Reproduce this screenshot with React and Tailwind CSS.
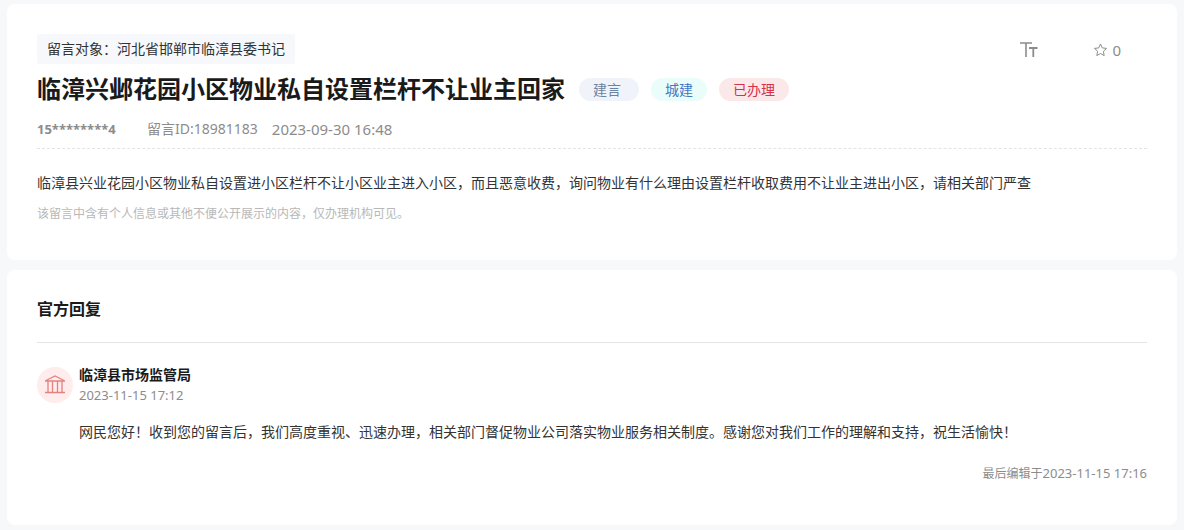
import React from "react";

const message = {
  target: "河北省邯郸市临漳县委书记",
  title: "临漳兴邺花园小区物业私自设置栏杆不让业主回家",
  user: "15********4",
  id: "18981183",
  date: "2023-09-30 16:48",
  content:
    "临漳县兴业花园小区物业私自设置进小区栏杆不让小区业主进入小区，而且恶意收费，询问物业有什么理由设置栏杆收取费用不让业主进出小区，请相关部门严查",
  notice: "该留言中含有个人信息或其他不便公开展示的内容，仅办理机构可见。",
};

const reply = {
  office: "临漳县市场监管局",
  date: "2023-11-15 17:12",
  content:
    "网民您好！收到您的留言后，我们高度重视、迅速办理，相关部门督促物业公司落实物业服务相关制度。感谢您对我们工作的理解和支持，祝生活愉快！",
  edited: "2023-11-15 17:16",
};

const FontSizeIcon = () => (
  <svg width="18" height="16" viewBox="0 0 18 16" fill="none" stroke="currentColor" aria-hidden="true">
    <path d="M0 1h12M6 1v14" strokeWidth="1.6" />
    <path d="M9 6h8.5M13.3 6v9" strokeWidth="1.8" />
  </svg>
);

const StarIcon = () => (
  <svg width="14" height="14" viewBox="0 0 14 14" fill="none" stroke="currentColor" strokeWidth="1" strokeLinejoin="round" aria-hidden="true">
    <path d="M6.5 1l1.8 3.9 4.2.5-3.1 2.9.8 4.3-3.7-2.1-3.7 2.1.8-4.3L.5 5.4l4.2-.5z" />
  </svg>
);

const OfficeIcon = () => (
  <svg width="20" height="20" viewBox="0 0 20 20" fill="none" stroke="currentColor" strokeWidth="1.3" aria-hidden="true">
    <path d="M1 5.5L10 1l9 4.5M0 6h20M3 6v11M7.5 6v11M12.5 6v11M17 6v11M0 17.5h20" />
  </svg>
);

const App = () => {
  return (
    <div className="bg-[#f7f8fa] px-[7px] pt-1 pb-[5px] font-['Noto_Sans','Noto_Sans_CJK_SC',sans-serif] text-sm text-[#333]">
      <main className="flex flex-col gap-2.5">
        <section className="rounded-lg bg-white px-[30px] pt-[30px] pb-8">
          <div className="flex items-center justify-between">
            <p className="rounded-xs bg-[#f6f8fb] px-2.5 leading-[30px]">留言对象：{message.target}</p>
            <div className="flex items-center gap-14 pt-0.5 pr-[26px] text-[15px] text-[#8c8c8c]">
              <button type="button" aria-label="字体大小">
                <FontSizeIcon />
              </button>
              <button type="button" className="flex items-center gap-1 leading-6" aria-label="收藏 0">
                <StarIcon />
                <span>0</span>
              </button>
            </div>
          </div>

          <div className="mt-[5px] flex items-center">
            <h1 className="text-2xl leading-10 font-bold text-[#1a1a1a]">{message.title}</h1>
            <div className="ml-3.5 flex gap-3 leading-[23px]">
              <span className="rounded-full bg-[#f0f4fa] pr-[18px] pl-3.5 text-[#6b839e]">建言</span>
              <span className="rounded-full bg-[#ebfdfa] px-3.5 text-[#3f78c4]">城建</span>
              <span className="rounded-full bg-[#fbe9ea] px-3.5 text-[#d9304a]">已办理</span>
            </div>
          </div>

          <div className="flex border-b border-dashed border-[#e4e4e4] pt-2 pb-[7px] leading-6 text-[#8c8c8c]">
            <span className="w-[110px] text-[13px] leading-6 font-bold">{message.user}</span>
            <span className="mr-3.5">留言ID:{message.id}</span>
            <time className="text-[15px] leading-6">{message.date}</time>
          </div>

          <p className="mt-5 leading-7">{message.content}</p>
          <p className="mt-[3px] text-xs leading-7 text-[#b8b8b8]">{message.notice}</p>
        </section>

        <section className="rounded-lg bg-white px-[30px] pt-[25px] pb-[39px]">
          <h2 className="border-b border-[#e4e4e4] pb-[19px] text-base leading-7 font-bold text-[#1a1a1a]">官方回复</h2>

          <div className="mt-6 flex gap-1.5">
            <div className="flex size-9 shrink-0 items-center justify-center rounded-full bg-[#ffecec] text-[#e5827f]">
              <OfficeIcon />
            </div>
            <div className="grow">
              <h3 className="leading-4 font-bold text-[#1a1a1a]">{reply.office}</h3>
              <time className="block text-[13px] leading-6 text-[#8c8c8c]">{reply.date}</time>
              <p className="mt-[11px] leading-7">{reply.content}</p>
              <p className="mt-[15px] text-right text-xs leading-6 text-[#8c8c8c]">
                最后编辑于<time className="text-[13px]">{reply.edited}</time>
              </p>
            </div>
          </div>
        </section>
      </main>
    </div>
  );
};

export default App;
